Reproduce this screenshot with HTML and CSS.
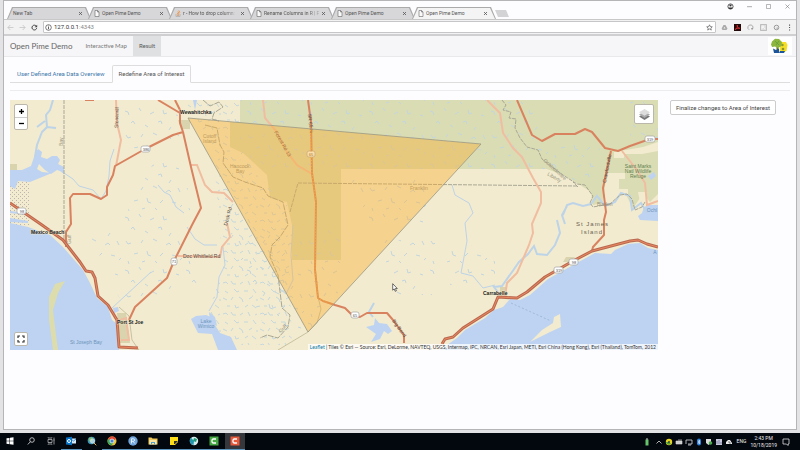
FILE: index.html
```html
<!DOCTYPE html>
<html lang="en">
<head>
<meta charset="utf-8">
<title>Open Pime Demo</title>
<link rel="stylesheet" href="styles.css">
</head>
<body>
<svg class="defs" aria-hidden="true">
  <symbol id="page" viewBox="0 0 6 7"><path d="M1 .5h2.6L5 2v4.5H1zM3.5.5V2H5" fill="#fafafa" stroke="#666" stroke-width=".6"/></symbol>
  <symbol id="close" viewBox="0 0 5 5"><path d="M1 1l3 3M4 1L1 4" stroke="#555" stroke-width=".8"/></symbol>
</svg>
<div class="window">
  <header class="tabstrip">
    <div class="tabs">
      <div class="tab"><button class="tab-title">New Tab</button><button class="tab-close" aria-label="Close"><svg><use href="#close"/></svg></button></div>
      <div class="tab"><button class="tab-title"><svg class="fav"><use href="#page"/></svg>Open Pime Demo</button><button class="tab-close" aria-label="Close"><svg><use href="#close"/></svg></button></div>
      <div class="tab"><button class="tab-title fade"><svg class="fav" viewBox="0 0 6 7"><path d="M1 4v2.5h4V4" fill="none" stroke="#aaa" stroke-width=".7"/><path d="M2 5.2h2M2 3.6l2 .5M2.6 2l1.7 1.2M3.8.6l1 1.9" stroke="#f08a33" stroke-width=".9"/></svg>r - How to drop column:</button><button class="tab-close" aria-label="Close"><svg><use href="#close"/></svg></button></div>
      <div class="tab"><button class="tab-title fade"><svg class="fav"><use href="#page"/></svg>Rename Columns in R | F</button><button class="tab-close" aria-label="Close"><svg><use href="#close"/></svg></button></div>
      <div class="tab"><button class="tab-title"><svg class="fav"><use href="#page"/></svg>Open Pime Demo</button><button class="tab-close" aria-label="Close"><svg><use href="#close"/></svg></button></div>
      <div class="tab active"><button class="tab-title"><svg class="fav"><use href="#page"/></svg>Open Pime Demo</button><button class="tab-close" aria-label="Close"><svg><use href="#close"/></svg></button></div>
      <button class="new-tab" aria-label="New tab"></button>
    </div>
    <div class="controls">
      <button aria-label="Profile"><svg viewBox="0 0 7 7"><circle cx="3.5" cy="3.5" r="2.6" fill="none" stroke="#333" stroke-width=".8"/><circle cx="3.5" cy="2.5" r="1.1" fill="#333"/><path d="M1.4 4.4h4.2L4.8 6H2.2z" fill="#333"/></svg></button>
      <button aria-label="Minimize"><svg viewBox="0 0 7 7"><path d="M1 3.7h5" stroke="#777" stroke-width=".6"/></svg></button>
      <button aria-label="Maximize"><svg viewBox="0 0 7 7"><path d="M1.5 1.5h4v4h-4z" fill="none" stroke="#888" stroke-width=".6"/></svg></button>
      <button aria-label="Close window"><svg viewBox="0 0 7 7"><path d="M1.5 1.5l4 4M5.5 1.5l-4 4" stroke="#777" stroke-width=".6"/></svg></button>
    </div>
  </header>
  <div class="toolbar">
    <button aria-label="Back"><svg viewBox="0 0 7 7"><path d="M6.5 3.5H1M3.3 1L.9 3.5 3.3 6" fill="none" stroke="#c4c4c4" stroke-width=".8"/></svg></button>
    <button aria-label="Forward"><svg viewBox="0 0 7 7"><path d="M.5 3.5H6M3.7 1l2.4 2.5L3.7 6" fill="none" stroke="#c4c4c4" stroke-width=".8"/></svg></button>
    <button aria-label="Reload"><svg viewBox="0 0 7 7"><path d="M5.7 4.2A2.4 2.4 0 1 1 5.2 2" fill="none" stroke="#444" stroke-width="1"/><path d="M6.2.7v2.6H3.6z" fill="#444"/></svg></button>
    <div class="address">
      <svg viewBox="0 0 7 7"><circle cx="3.5" cy="3.5" r="2.8" fill="none" stroke="#444" stroke-width=".7"/><path d="M3.5 3v2.2M3.5 1.7v.8" stroke="#333" stroke-width=".8"/></svg>
      <span class="url">127.0.0.1<span>:4343</span></span>
      <button aria-label="Bookmark"><svg viewBox="0 0 7 7"><path d="M3.5.8l.8 1.8 2 .2-1.5 1.3.5 2-1.8-1.1-1.8 1.1.5-2L.7 2.8l2-.2z" fill="none" stroke="#444" stroke-width=".6"/></svg></button>
    </div>
    <div class="extensions">
      <button aria-label="Drive"><svg viewBox="0 0 7 7"><path d="M2.5 1h2l2 3.5-1 1.5h-4L.6 4.5z" fill="#aaa"/><path d="M3.5 2.7L2.5 4.4h2z" fill="#f2f2f2"/></svg></button>
      <button aria-label="PDF"><svg viewBox="0 0 7 7"><path d="M0 0h7v7H0z" fill="#24090b"/><path d="M1.2 5.4C3.4 4.5 3.5 2.5 3.2 1.2c0 2 1 3 2.7 3.1-1.6-.3-3 .1-4.7 1.1z" fill="none" stroke="#e33" stroke-width=".8"/></svg></button>
      <button aria-label="Sync"><svg viewBox="0 0 7 7"><path d="M2.2 5.8A2.6 2.6 0 1 1 6 4" fill="none" stroke="#999" stroke-width=".8"/><path d="M4 4h2.5L5 6.3z" fill="#999"/></svg></button>
      <button aria-label="Extension"><svg viewBox="0 0 7 7"><path d="M.5.5h6v6h-6z" fill="#ddd" stroke="#aaa" stroke-width=".7"/><path d="M2 5.2V2h1.7v1.6H2M4 3.5l1 1.7" fill="none" stroke="#fff" stroke-width=".7"/></svg></button>
      <button aria-label="Camera"><svg viewBox="0 0 7 7"><circle cx="3.5" cy="3.5" r="2.3" fill="#eee" stroke="#888" stroke-width=".8"/><circle cx="4.3" cy="4.2" r="1" fill="#bbb"/></svg></button>
      <button aria-label="Menu"><svg viewBox="0 0 7 7"><path d="M3 .6h1.1v1.1H3zM3 3h1.1v1.1H3zM3 5.4h1.1v1.1H3z" fill="#555"/></svg></button>
    </div>
  </div>

  <nav class="navbar">
    <a class="brand" href="#">Open Pime Demo</a>
    <a class="nav-link" href="#">Interactive Map</a>
    <a class="nav-link current" href="#">Result</a>
    <svg class="logo" viewBox="0 0 24 18" aria-label="Open Pime logo"><path d="M0 0h24v18H0z" fill="#fff"/><path d="M12.500 5h5.500l1.500 3-1 6-3 1.500-4-1z" fill="#f4df24"/><path d="M8.500 7.500h2V14h-2z" fill="#66722a"/><path d="M3 7.500l1-3 3-2.700 4 .2 3 3-.5 4L10 11l-3-1.500L4 10z" fill="#8cb63d"/><path d="M7 4l4 4M11 4L8 8" stroke="#5f9b3c" stroke-width=".7"/><circle cx="14.500" cy="8" r="1.200" fill="#8c9a30"/><circle cx="15" cy="12" r="1.300" fill="#8a932b"/><path d="M5 11.500l3 1.500 3-1.500V16H6zM12 14h5l-1 2h-5z" fill="#1d559d"/></svg>
  </nav>

  <main class="page">
    <nav class="subtabs">
      <a href="#">User Defined Area Data Overview</a>
      <a class="current" href="#">Redefine Area of Interest</a>
    </nav>
    <hr>
    <div class="content">
      <section class="map" aria-label="Map">
        <svg class="map-canvas" viewBox="10 100 648 250" preserveAspectRatio="xMidYMid slice">
          <defs>
            <pattern id="marsh" width="61" height="53" patternUnits="userSpaceOnUse">
              <g fill="none" stroke="#c3d5dc" stroke-width="1"><path d="M3 5l3 1 1 3M17 2l2 3M28 8l4-2M41 4l1 4 3-1M54 9l3 1M9 17l2-2 2 3M23 19l3 2M36 16l3-1 1 3M49 21l-2 3M4 29l2 3 3-1M19 31l2-3M31 27l4 2M44 33l3-2 2 2M56 29l2 4M12 42l4-1M25 39l1 4 3 1M38 44l3-3M50 43l4 1M6 49l1 3M20 50l3-1M33 49l2 2M58 48l2-2"/></g>
            </pattern>
            <pattern id="wet" width="37" height="31" patternUnits="userSpaceOnUse">
              <g fill="none" stroke="#c6d7dd" stroke-width="1"><path d="M1 4l3-1 2 2M9 2l2 3 3 0M18 5l3-2M26 2l2 4M33 5l2-1M3 12l3 2M12 10l3 3 2-1M22 12l4 0M31 10l3 4M1 19l4 2M9 21l2-3M17 18l3 2 1 3M27 20l3-2M34 21l2 0M5 27l3 0M13 26l1 3 3-1M23 28l3-2M30 26l4 3"/></g>
            </pattern>
            <pattern id="urban" width="4" height="4" patternUnits="userSpaceOnUse"><path d="M0 0h1v1H0zM2 2h1v1H2z" fill="#bdb5ae"/></pattern>
          </defs>
          <path d="M10 100h648v250H10z" fill="#f2ebcf"/>
          <path d="M240 100H658V194L650 202L643 194L633 208L625 193L610 202L603 203L593 205L591 192L577 183L563 175L547 169H341V260H292V225L287 202L270 198L267 175L253 162L243 153L230 147V122H240z" fill="#dadcb4"/>
          <path d="M643 147l15-5v9l-16 3h-18v4h-10v-6zM607 173h18v6h-6v10h9v5l-9 2-7 8-10 1zM638 192h9v10h-7z" fill="#f2ebcf"/>
          <path d="M240 100h300v40l30 29H341H240zM550 140h50v40h-30z" fill="url(#marsh)"/>
          <path d="M118 105h58l5 30-38 17-23-10zM90 235l80-25 30 75-75 25zM155 160h30l5 50-70 15zM445 245h50v40h-45zM380 240h55v55h-40z" fill="url(#marsh)"/>
          <path d="M184 100h55v22h-9v28l27 25 30 30 5 140h-60l-24-18 5-30 10-30-10-120-32-45z" fill="url(#wet)"/>
          <path d="M230 230h110v60l-30 42-50-12zM350 180h80v45h-60zM630 100h28v40h-28z" fill="url(#marsh)"/>
          <path d="M10 180h20v46H10z" fill="url(#urban)"/>
          <path d="M10 164h7v6h-7zM178 120h12v9h-9zM117 313h9l4 30h-10zM500 287h7v9h-7zM566 257h9l-5 5h-7z" fill="#d9d3ae"/>
          <g fill="#bdd3f1">
            <path d="M10 223l18 4 22 8 13 12 20 23 7 13 7 15 11 9 4 13 5 4 2 26H10z"/>
            <path d="M10 170h12l9-4 4-12 3-5 4 3-1 5 6 2 5-3h5l3 4-2 4 6 3v7l-4-3-3-1-6 4-6-4-6-6-2 5 5 3 10 1-22 9-12-1-3 8-5-3zM10 211l17 2v2l-17-2zM10 218l18 3v2l-18-1z"/>
            <path d="M658 250l-10-2-8-5-12 1-13 6-4 4-16-1-20 11-27 15-18 16-10 5-10-1-7 8-9 3-9 8-20 12-8 8-17 12h218z"/>
            <path d="M191 319l5-3 10-1 9 4v6l5 8 11 4 6 13h-19l-6-16-14-1zM209 312l6 5 2 9-7-4z"/>
            <path d="M644 207l5-2h9v16l-18-1-2-4 4-3zM648 176l6-4 2 4-5 4z"/>
            <path d="M366 327l8-2 1-7 4 5 8 1 5 7-4 3-4-3-4 8-9 3 5-8zM113 308l5-1 1 4-5 2zM193 100h4l-2 10z"/>
          </g>
          <path d="M65 281l-10 3-6 13v23l4 30h5l-3-23-2-17 5-17z" fill="#dddcad"/>
          <path d="M560 314l1 13-11 5-20 10 12-12 11-7 1-6z" fill="#f2ebcf"/>
          <path d="M497 309l8-6-1-4-7-1z" fill="#f2ebcf"/>
          <g fill="none" stroke="#bdd3e8" stroke-width="1">
            <path stroke-width="2" d="M53 100l-3 10-4 5 1 12-5 5-5 13-2 12M47 127l9 1M37 127l8-6"/>
            <path d="M64 173l9 6 6 7 14 4 8 9 5-8 3-15 1-15 4-12M112 308l39-36M158 185l6 7 6 3 6 12 8 6M187 227l8 12 9 6 13 0M223 247l2 18-6 12-2 20-8 14M293 225l-2 30 2 25-7 14-6-5M452 185l3 10 14 8 4 10-8 10 2 18-6 32 12 3 10 12 12-3"/>
            <path stroke-width="2" d="M498 292l-4-5 8-1 10-14 7-10 9-8 6-8 3 8 10 1 8-10 5-12-3-13M563 215l4-10 6-2 10 3 8-2 6-8 8 10 10-4 6-9 9 3 2 14 9-7 6 10M373 317l-4-5 5-9M565 224l-3-9 5-9"/>
          </g>
          <path d="M511 303l40 18" stroke="#93aecd" stroke-width=".7" stroke-dasharray="2 2"/>
          <g fill="none" stroke="#a9a794" stroke-width="1" stroke-dasharray="4 1">
            <path d="M64 100v140M502 100l4 5-3 5 8 2-2 6 7 1-1 9 5 10 7 9 11 3 4 9 6 5 15 11 14 9 8 1 5 7 3 4-3 7 3 4 17-3 10-9 7-1 5 5 3 11 7-3 3-5M578 187l-5-5M298 183l279 3M290 212l8-29"/>
            <path d="M203 100l7 6 9-4 4 5-9 6-2 6 7 2M205 125l12 3 3 17 4 7-1 11 10 14 12 5 18 6 5 8 15 6 5 23-8 12-8 8-2 12 8 18 4 33 8 7-2 12-10 11-11-3-7 3" stroke-dasharray="6 1"/>
          </g>
          <path d="M278 350l30-18 9-9 4-14-3-12-3-33M119 307l10 9 3 24 7 10" fill="none" stroke="#c9c2a0"/>
          <g fill="none" stroke="#f1bda0" stroke-width="2">
            <path d="M116 100l1 23 4 17-5 26M191 165l6 0 8 20 7 7 12 1 9 9M227 223l3 14-8 10-2 10-42-1M263 100l2 18 12 14 10 20 10 13 15 9"/>
            <path d="M487 100l13 13 3 20 10 15 9 9 11 21 8 14v11l-9 21 1 9-4 12-12 28-10 10-2 13M622 151l15 19 8 13 2 22 11-4M120 320l6-2 3 22h-8M66 230v15"/>
          </g>
          <g fill="none" stroke="#d9825f" stroke-width="2" stroke-linejoin="round">
            <path d="M175 100l5 10v13l3 9 8 35 10 41-9 17-18 36-7 17-32 29-6 13M158 100l22 13M85 100h9M183 132l-10 3-28 14-30 17-2 9-6 12v8l-6 4-11-5H73l-3 4 1 26-5 8v15"/>
            <path d="M308 100l3 22 1 51 4 29-1 68 3 28 5 3 12 4 10 3 7 7 8 2 7-4h20l6 7 11 15v8"/>
            <path d="M517 100l15 35 10 6 13-7h20l10-5 7 3 13 16 13 3 12-5 20-7h8M611 151l-8 37 3 24-2 8v15l-11 12-1 4"/>
            <path stroke="#b96950" stroke-width="3" d="M10 203l32 22 21 15 17 22 6 9 6 1 3 6 3 18 10 9 9 15 2 27 19 1M658 247l-11-3-9-4-8 1-38 10-19 10-28 16-18 15-10 6-19-1-5 12-11 7-19 12-10 9-8 2-3 5"/>
            <path stroke="#e88760" stroke-width="1" d="M10 203l32 22 21 15 17 22 6 9 6 1 3 6 3 18 10 9 9 15 2 27 19 1M658 247l-11-3-9-4-8 1-38 10-19 10-28 16-18 15-10 6-19-1-5 12-11 7-19 12-10 9-8 2-3 5"/>
          </g>
          <g fill="#fff" stroke="#a5a5a5" stroke-width=".7">
            <rect x="141" y="146" width="9" height="6" rx="2"/><rect x="17" y="208" width="9" height="6" rx="2"/><rect x="171" y="258" width="6" height="7" rx="2"/><rect x="307" y="151" width="8" height="6" rx="2"/><rect x="351" y="312" width="8" height="6" rx="2"/><rect x="554" y="267" width="9" height="6" rx="2"/><rect x="569" y="259" width="9" height="6" rx="2"/><rect x="645" y="136" width="10" height="6" rx="2"/>
          </g>
          <g class="shield"><text x="146" y="151">386</text><text x="22" y="213">98</text><text x="174" y="263">71</text><text x="311" y="156">65</text><text x="355" y="317">65</text><text x="559" y="272">319</text><text x="574" y="264">98</text><text x="650" y="141">319</text></g>
          <g class="road-name"><text transform="translate(118 128) rotate(-88)">Stonemill</text><text transform="translate(227 226) rotate(-75)">Dock Rd</text><text transform="translate(274 132) rotate(60)">Forest Rd 13</text><text transform="translate(308 114) rotate(84)">SR 65 N</text><text transform="translate(392 321) rotate(54)">Big Bend</text><text transform="translate(606 183) rotate(-79)">Crawfordville</text><text x="183" y="258">Doc Whitfield Rd</text></g>
          <g class="minor"><text transform="translate(63 146) rotate(-90)">Bay</text><text transform="translate(71 244) rotate(-90)">Gulf</text><text x="203" y="138">Cutoff</text><text x="203" y="143">Island</text><text x="230" y="168">Hancock</text><text x="236" y="173">Bay</text><text x="410" y="190">Franklin</text><text transform="translate(543 161) rotate(42)">Ochlockonee</text><text transform="translate(547 175) rotate(30)">Liberty</text><text x="597" y="206">Bladen</text><text transform="translate(281 333) rotate(-50)">Gulf</text></g>
          <g class="green"><text x="638" y="168">Saint Marks</text><text x="638" y="173">Natl Wildlife</text><text x="638" y="178">Refuge</text></g>
          <g class="water"><text x="86" y="344">St Joseph Bay</text><text x="206" y="323">Lake</text><text x="206" y="328">Wimico</text><text x="652" y="212">Ochl</text><text x="655" y="254">A</text></g>
          <g class="city"><text x="180" y="114">Wewahitchka</text><text x="31" y="234">Mexico Beach</text><text x="117" y="324">Port St Joe</text><text x="483" y="295">Carrabelle</text></g>
          <g class="island"><text x="576" y="226">St James</text><text x="581" y="234">Island</text></g>
          <path d="M188 118l293 26-173 188z" fill="#faac2d" fill-opacity=".4" stroke="#9a9886" stroke-opacity=".8"/>
          <path d="M310 124l2 49 4 29-1 68 3 28 10 5" fill="none" stroke="#f3b14f" stroke-width="1" stroke-dasharray="1 2"/>
        </svg>
        <div class="zoom-control"><button aria-label="Zoom in"><svg viewBox="0 0 7 7"><path d="M3.500 1v5M1 3.500h5" stroke="#000" stroke-width="1.300"/></svg></button><button aria-label="Zoom out"><svg viewBox="0 0 7 7"><path d="M1 3.500h5" stroke="#000" stroke-width="1.300"/></svg></button></div>
        <button class="layers" aria-label="Layers"><svg viewBox="0 0 13 13"><path d="M1 8.500l5.500-3 5.500 3-5.500 3.500z" fill="#777"/><path d="M1 6.500l5.500-3 5.500 3L6.500 10z" fill="#aaa"/><path d="M1 4.300L6.500 1 12 4.300 6.500 7.800z" fill="#ddd"/></svg></button>
        <button class="fullscreen" aria-label="Full screen"><svg viewBox="0 0 8 8"><path d="M1 3V1h2M5 1h2v2M7 5v2H5M3 7H1V5" fill="none" stroke="#333" stroke-width="1.200"/></svg></button>
        <p class="attribution"><a href="#">Leaflet</a> | Tiles © Esri — Source: Esri, DeLorme, NAVTEQ, USGS, Intermap, iPC, NRCAN, Esri Japan, METI, Esri China (Hong Kong), Esri (Thailand), TomTom, 2012</p>
        <svg class="pointer" viewBox="0 0 6 9" aria-hidden="true"><path d="M.7.7v6.500l1.500-1.300 1 2.400 1.200-.5-1-2.300h1.900z" fill="#fff" stroke="#333" stroke-width=".7"/></svg>
      </section>
      <aside><button class="finalize">Finalize changes to Area of Interest</button></aside>
    </div>
  </main>
</div>

<footer class="taskbar">
  <div class="apps">
    <button aria-label="Start"><svg viewBox="0 0 10 10"><path d="M1.500 2.300l3-.4v2.900h-3zM5 1.800l3.500-.5v3.500H5zM1.500 5.300h3v2.900l-3-.4zM5 5.300h3.500v3.500L5 8.300z" fill="#fff"/></svg></button>
    <button aria-label="Search"><svg viewBox="0 0 10 10"><circle cx="6" cy="4" r="2.300" fill="none" stroke="#ddd" stroke-width=".8"/><path d="M4.400 5.700L1.800 8.500" stroke="#ddd" stroke-width=".8"/></svg></button>
    <button aria-label="Task view"><svg viewBox="0 0 10 10"><path d="M2 3.500h4v3H2zM2 1.500V2h4v-.5M2 8.500V8h4v.5M8 1.500v7M7.500 4h1" fill="none" stroke="#ccc" stroke-width=".7"/></svg></button>
    <button class="open" aria-label="Outlook"><svg viewBox="0 0 10 10"><path d="M5 2.500h5v5H5z" fill="#d7ebfa"/><path d="M5 3l2.500 2L10 3" fill="none" stroke="#0872c4" stroke-width=".7"/><path d="M0 1.500L6 .8v8.400L0 8.500z" fill="#0872c4"/><circle cx="3" cy="5" r="1.500" fill="none" stroke="#fff"/></svg></button>
    <button aria-label="ArcMap"><svg viewBox="0 0 10 10"><circle cx="4.500" cy="4.500" r="3.800" fill="#3f99bd"/><path d="M2 2l3-1 1 3-2 2-2-1z" fill="#83bb69"/><circle cx="5.500" cy="5" r="2.200" fill="#cce8ef" fill-opacity=".7" stroke="#ddd" stroke-width=".6"/><path d="M7 7l2.300 2.300" stroke="#e2b43e"/></svg></button>
    <button class="open" aria-label="Chrome"><svg viewBox="0 0 10 10"><circle cx="5" cy="5" r="4.500" fill="#eac43a"/><path d="M5 5L1 3a4.500 4.500 0 0 1 8.200 0z" fill="#df493a"/><path d="M5 5L1 3a4.500 4.500 0 0 0 3.500 6.500L7 6z" fill="#40a357"/><circle cx="5" cy="5" r="2" fill="#4584dd" stroke="#fff" stroke-width=".7"/></svg></button>
    <button class="open" aria-label="RStudio"><svg viewBox="0 0 10 10"><circle cx="5" cy="5" r="4.700" fill="#71a4db"/><path d="M3.500 7.500V2.800h1.800a1.200 1.200 0 0 1 0 2.500H3.500M5 5.300l1.800 2.200" fill="none" stroke="#fff" stroke-width=".8"/></svg></button>
    <button class="open" aria-label="File Explorer"><svg viewBox="0 0 10 10"><path d="M.5 1.500h3l1 1h5v6h-9z" fill="#f0c75b"/><path d="M1.500 4h7v4.500h-7z" fill="#fae6a4"/><path d="M3 6h4v2.500H6V7H4v1.500H3z" fill="#4aa3dc"/></svg></button>
    <button class="open" aria-label="Sticky Notes"><svg viewBox="0 0 10 10"><path d="M1 1h8v5L6 9H1z" fill="#ffdf18"/><path d="M5 5h4L6 8H5z" fill="#333"/></svg></button>
    <button class="open" aria-label="Browser"><svg viewBox="0 0 10 10"><circle cx="5" cy="5" r="4.200" fill="#d6edf0"/><path d="M2 1.800A4.200 4.200 0 0 0 4.500 9L5 5z" fill="#2397b1"/><path d="M5 2l3 1-1 3-3-1z" fill="#229b75"/></svg></button>
    <button class="open" aria-label="Camtasia"><svg viewBox="0 0 10 10"><path d="M.5.500h9v9h-9z" fill="#45a843"/><path d="M7 3H4L3 4v2l1 1h3" fill="none" stroke="#fff" stroke-width="1.300"/></svg></button>
    <button class="open selected" aria-label="Recorder"><svg viewBox="0 0 10 10"><path d="M.5.500h9v9h-9z" fill="#e8583b"/><path d="M7 3H4L3 4v2l1 1h3" fill="none" stroke="#fff" stroke-width="1.300"/></svg></button>
  </div>
  <div class="tray">
    <svg viewBox="0 0 8 8"><path d="M2.500 1.500h3v6h-3z" fill="#66c46c"/><path d="M3 .5h2v1H3z" fill="#ccc"/></svg>
    <svg viewBox="0 0 8 8"><path d="M1.500 5.500L4 3l2.500 2.500" fill="none" stroke="#ddd" stroke-width=".8"/></svg>
    <svg viewBox="0 0 8 8"><circle cx="4" cy="4" r="3.200" fill="#e7d321"/><path d="M1 4a3 3 0 0 0 5 2L4 4z" fill="#50a53b"/><circle cx="4" cy="4" r="1" fill="#244"/></svg>
    <svg viewBox="0 0 8 8"><path d="M1 3h6v3H1zM3 2h4" fill="#ccc" stroke="#ddd" stroke-width=".6"/></svg>
    <svg viewBox="0 0 8 8"><path d="M1 2h6v4H3M3 7h3M1 2v4" fill="none" stroke="#ddd" stroke-width=".8"/></svg>
    <svg viewBox="0 0 8 8"><rect x="2" y=".5" width="4" height="7" rx="2" fill="#2583df"/><path d="M3 2.700L5 5 4 6V2l1 1-2 2.300" fill="none" stroke="#fff" stroke-width=".5"/></svg>
    <svg viewBox="0 0 8 8"><path d="M1 1h5v4l-2.500 2L1 5z" fill="#ddd"/><circle cx="5.500" cy="5" r="1.800" fill="#4cab50"/></svg>
    <svg viewBox="0 0 8 8"><path d="M1 1h6v6H1z" fill="#c8c8dc"/><path d="M2 6V3M4 6V2M6 6V4" stroke="#737399" stroke-width=".8"/></svg>
    <svg viewBox="0 0 8 8"><path d="M1 6V4l2-2h2l2 3v1z" fill="#eee"/><path d="M3 4h2v2" fill="none" stroke="#333" stroke-width=".6"/></svg>
    <span class="lang">ENG</span>
    <span class="clock"><time>2:43 PM</time><time>10/18/2019</time></span>
    <svg viewBox="0 0 8 8"><path d="M1 1h6v5H6v1.500L4.500 6H1z" fill="none" stroke="#ddd" stroke-width=".8"/></svg>
  </div>
</footer>
</body>
</html>
```
FILE: styles.css
```css
* { box-sizing: border-box; }

body {
  display: flex;
  flex-direction: column;
  min-height: 100vh;
  margin: 0;
  background: #e3e2e5;
  color: #555;
  font: 6px/8px "Liberation Sans", sans-serif;
}

button {
  margin: 0;
  padding: 0;
  border: 0;
  background: none;
  color: inherit;
  font: inherit;
}

a { color: inherit; text-decoration: none; }
svg { display: block; flex: none; }
.defs { position: absolute; width: 0; height: 0; }

.window {
  flex: 1;
  margin: 0 3px 3px;
  border: 1px solid #b5b4b7;
  background: #fdfcfe;
}

/* Browser frame */
.tabstrip {
  display: flex;
  justify-content: space-between;
  height: 19px;
  padding-left: 3px;
  border-bottom: 1px solid #c8c8c8;
  font: 5px/8px Roboto, sans-serif;
}

.tabs { display: flex; align-items: flex-end; }

.tab {
  position: relative;
  z-index: 0;
  display: flex;
  align-items: center;
  justify-content: space-between;
  width: 81px;
  height: 12px;
  padding: 0 5px 0 6px;
}

.tab::before,
.tab::after {
  content: "";
  position: absolute;
  z-index: -1;
  inset: 0 -3px 0 0;
  background: #aaa;
  clip-path: polygon(0 100%, 5px 0, calc(100% - 5px) 0, 100% 100%);
}

.tab::after { inset: 1px -2px 0 1px; background: #d7d6d8; }
.tab.active::after { background: #f4f4f4; }
.tab-title { display: flex; align-items: center; gap: 2px; white-space: nowrap; }
.fade { mask-image: linear-gradient(90deg, #000 80%, rgb(0 0 0 / .3)); }
.fav { width: 6px; height: 7px; }
.tab-close svg { width: 5px; height: 5px; }

.new-tab {
  width: 14px;
  height: 7px;
  margin: 0 0 2px 2px;
  background: #d3d3d5;
  clip-path: polygon(0 0, 11px 0, 100% 100%, 3px 100%);
}

.controls { display: flex; gap: 12px; height: 11px; padding-right: 5px; }
.controls svg, .toolbar svg { width: 7px; height: 7px; }

.toolbar {
  display: flex;
  align-items: center;
  gap: 5px;
  height: 16px;
  padding: 0 3px;
  border-bottom: 2px solid #cfced1;
  background: #f2f2f3;
}

.address {
  display: flex;
  flex: 1;
  align-items: center;
  gap: 2px;
  height: 12px;
  padding: 0 2px 0 1px;
  border: 1px solid #c6c6c8;
  border-radius: 1px;
  background: #fff;
}

.url { flex: 1; color: #333; font: 6px/8px Roboto, sans-serif; }
.url span { color: #888; }
.extensions { display: flex; gap: 6px; }

/* Application */
.navbar {
  display: flex;
  align-items: stretch;
  height: 21px;
  padding: 0 4px 0 6px;
  border-bottom: 1px solid #e9e8eb;
  background: #f6f5f8;
  color: #777;
  font-family: Lato, sans-serif;
  line-height: 20px;
}

.brand { margin-right: 7px; color: #666; font-size: 8px; }
.nav-link { padding: 0 6px; }
.nav-link.current { background: #dfe0e1; color: #555; }
.logo { align-self: center; width: 24px; height: 18px; margin-left: auto; }

.page { padding: 8px 6px 0; }

.subtabs {
  display: flex;
  height: 18px;
  border-bottom: 1px solid #ddd;
  font-family: Roboto, sans-serif;
}

.subtabs a {
  height: 18px;
  padding: 0 6px;
  border: 1px solid transparent;
  color: #4078ab;
  line-height: 16px;
}

.subtabs .current {
  border-color: #ddd #ddd #fdfcfe;
  border-radius: 2px 2px 0 0;
  background: #fdfcfe;
  color: #555;
}

hr {
  height: 1px;
  margin: 7px 0 9px;
  border: 0;
  background: #ecebee;
}

.content { display: flex; align-items: flex-start; gap: 12px; }
.map { position: relative; flex: 1; overflow: hidden; }
.map-canvas { width: 100%; height: auto; }
.map text { font-size: 5px; }
.map .shield text { fill: #555; font-size: 4px; text-anchor: middle; }
.road-name { fill: #5c4b42; }
.minor { fill: #98917b; }
.green { fill: #62804f; text-anchor: middle; }
.water { fill: #6d93ba; text-anchor: middle; }
.city { fill: #222; font-weight: bold; stroke: #f2ebcf; stroke-width: 1px; stroke-opacity: .6; paint-order: stroke; }
.island { fill: #6b6351; }
.map .island text { font-size: 6px; letter-spacing: 1px; }

.zoom-control,
.layers,
.fullscreen {
  position: absolute;
  border: 1px solid #bbb8ab;
  border-radius: 2px;
  background: #fff;
}

.zoom-control { top: 4px; left: 4px; width: 14px; }
.zoom-control button { display: grid; place-items: center; width: 12px; height: 12px; }
.zoom-control button + button { border-top: 1px solid #ccc; }
.zoom-control svg { width: 7px; height: 7px; }
.layers { display: grid; place-items: center; top: 4px; right: 4px; width: 20px; height: 20px; }
.layers svg { width: 13px; height: 13px; }
.fullscreen { display: grid; place-items: center; bottom: 4px; left: 4px; width: 14px; height: 14px; }
.fullscreen svg { width: 8px; height: 8px; }

.attribution {
  position: absolute;
  right: 0;
  bottom: 0;
  margin: 0;
  padding: 0 2px;
  background: rgb(255 255 255 / .75);
  color: #333;
  font: 5px/6px Lato, sans-serif;
  white-space: nowrap;
}

.attribution a { color: #0078a8; }
.pointer { position: absolute; top: 73%; left: 59%; width: 6px; height: 9px; }

aside { width: 120px; }

.finalize {
  height: 15px;
  padding: 0 5px;
  border: 1px solid #ccc;
  border-radius: 2px;
  background: #fff;
  color: #444;
  font-family: Roboto, sans-serif;
}

/* Desktop taskbar */
.taskbar {
  display: flex;
  justify-content: space-between;
  height: 17px;
  background: #03070e;
  color: #eee;
  font: 5px/7px Roboto, sans-serif;
}

.apps { display: grid; grid-template-columns: repeat(12, 1fr); width: 245px; }
.apps button { display: grid; place-items: center; border-bottom: 1px solid transparent; }
.apps svg { width: 10px; height: 10px; }
.apps .open { border-bottom-color: #5b94bd; }
.apps .selected { background: #35373c; }
.tray { display: flex; align-items: center; gap: 2px; padding-right: 10px; }
.tray svg { width: 8px; height: 8px; }
.tray svg:first-child { margin-right: 2px; }
.lang { margin: 0 2px; }
.clock { display: flex; flex-direction: column; margin-right: 3px; text-align: center; }
```
